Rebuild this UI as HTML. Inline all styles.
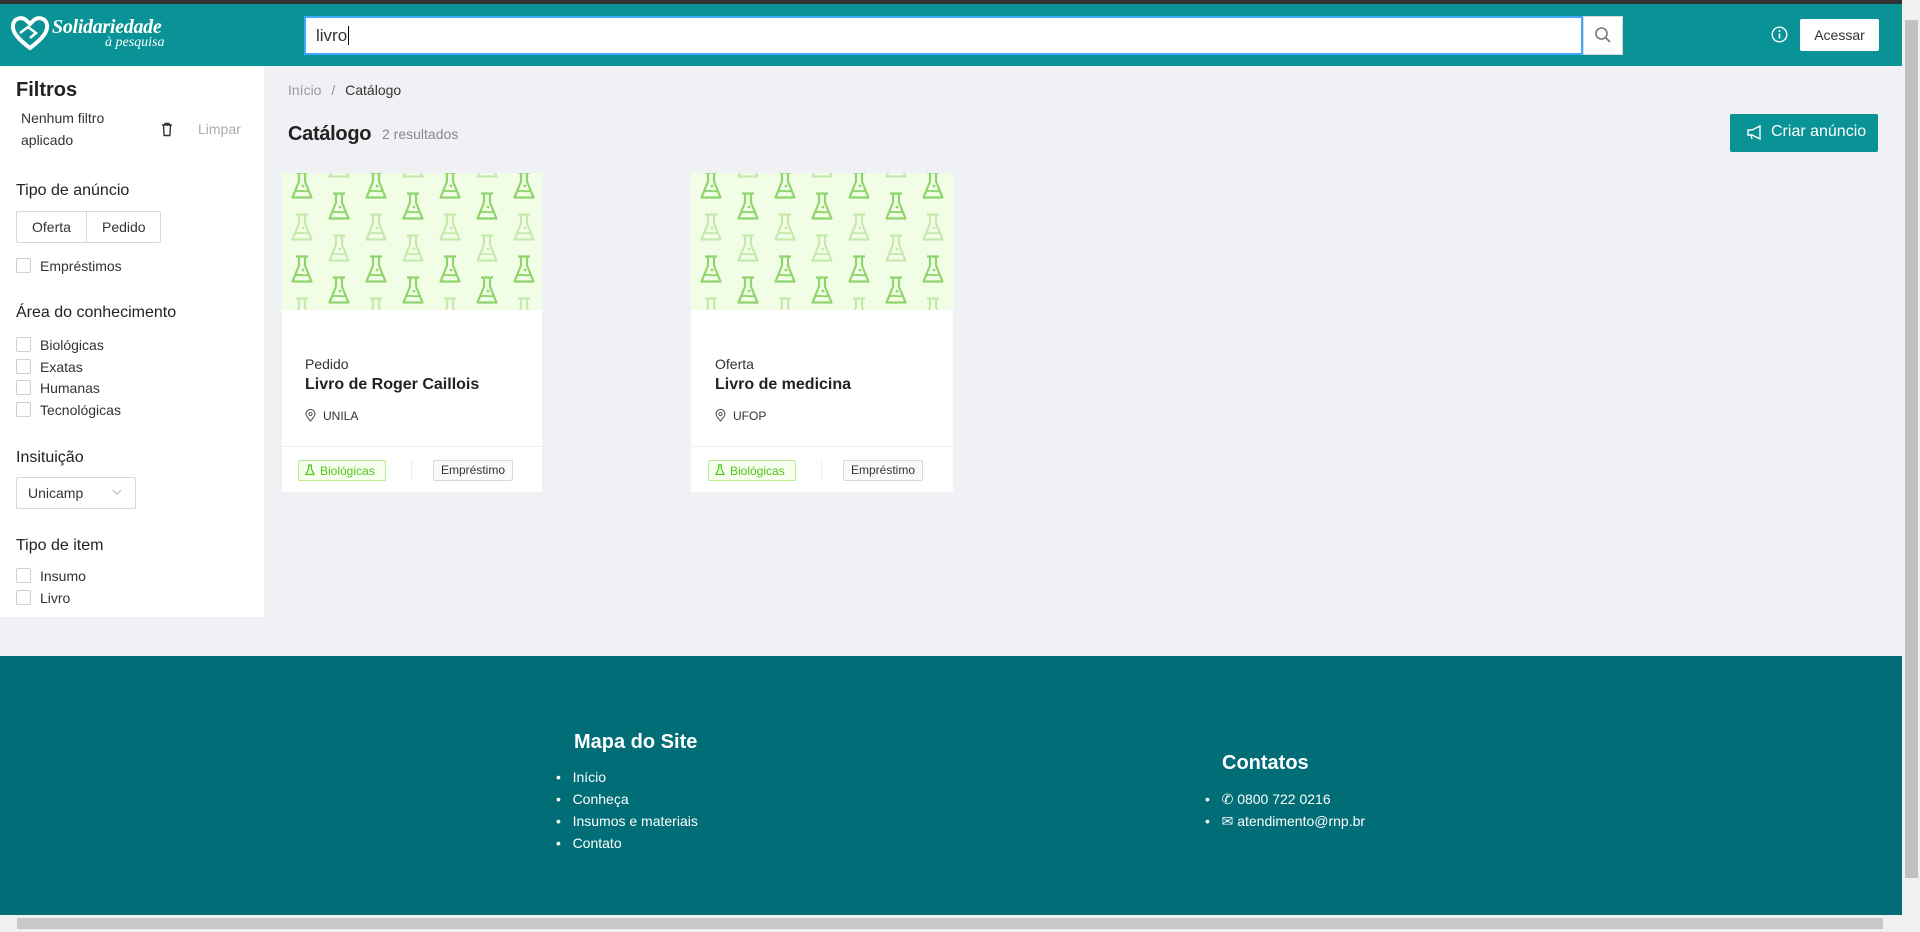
<!DOCTYPE html>
<html><head><meta charset="utf-8"><style>
*{box-sizing:border-box;margin:0;padding:0}
body{width:1920px;height:932px;overflow:hidden;font-family:"Liberation Sans",sans-serif;background:#f0f1f5;position:relative;color:#222}
.a{position:absolute}
.t{position:absolute;white-space:nowrap;line-height:1}
.cb{position:absolute;width:15px;height:15px;border:1px solid #d0d0d0;background:#fff;border-radius:2px}
</style></head><body>
<div class="a" style="left:0;top:0;width:1902px;height:4px;background:#333"></div>
<div class="a" style="left:0;top:4px;width:1902px;height:62px;background:#0a9396"></div>
<!-- logo -->
<svg class="a" style="left:10px;top:15px" width="40" height="36" viewBox="0 0 40 36"><path d="M20 33 C8 24 2 17 3 10 C4 3 12 1 17 6 L20 9 L23 6 C28 1 36 3 37 10 C38 17 32 24 20 33Z" fill="none" stroke="#fff" stroke-width="4"/><path d="M10 18 L18 12 L26 18 L20 23" fill="none" stroke="#fff" stroke-width="2.5"/></svg>
<div class="t" style="left:52px;top:17px;font-family:'Liberation Serif',serif;font-style:italic;font-weight:bold;font-size:20px;color:#fff;letter-spacing:-0.3px">Solidariedade</div>
<div class="t" style="left:105px;top:36px;font-family:'Liberation Serif',serif;font-style:italic;font-size:14px;color:#fff">à pesquisa</div>
<!-- search -->
<div class="a" style="left:304px;top:16px;width:1279px;height:39px;background:#fff;border:2px solid #40a9ff"></div>
<div class="t" style="left:316px;top:27px;font-size:17px;color:#333">livro<span style="border-left:1px solid #000;margin-left:1px"></span></div>
<div class="a" style="left:1583px;top:16px;width:40px;height:39px;background:#fff;border:1px solid #d9d9d9"></div>
<svg class="a" style="left:1594px;top:26px" width="18" height="18" viewBox="0 0 18 18"><circle cx="7.5" cy="7.5" r="5.5" fill="none" stroke="#777" stroke-width="1.6"/><path d="M11.5 11.5 L16 16" stroke="#777" stroke-width="1.6"/></svg>
<svg class="a" style="left:1771px;top:26px" width="17" height="17" viewBox="0 0 17 17"><circle cx="8.5" cy="8.5" r="7.3" fill="none" stroke="#fff" stroke-width="1.4"/><path d="M8.5 7.5v5" stroke="#fff" stroke-width="1.6"/><circle cx="8.5" cy="5" r="1" fill="#fff"/></svg>
<div class="a" style="left:1800px;top:19px;width:79px;height:32px;background:#fff;border-radius:2px;font-size:14px;color:#333;text-align:center;line-height:32px">Acessar</div>
<!-- scrollbars -->
<div class="a" style="left:1902px;top:0;width:18px;height:932px;background:#f0f0f0"></div>
<div class="a" style="left:1905px;top:20px;width:13px;height:858px;background:#c1c1c1"></div>
<div class="a" style="left:0;top:915px;width:1902px;height:17px;background:#f0f0f0"></div>
<div class="a" style="left:17px;top:918px;width:1866px;height:11px;background:#c8c8c8"></div>
<!-- sidebar -->
<div class="a" style="left:0;top:66px;width:264px;height:551px;background:#fff"></div>
<div class="t" style="left:16px;top:80px;font-size:20px;font-weight:bold;color:#222">Filtros</div>
<div class="t" style="left:21px;top:111px;font-size:14px;color:#333">Nenhum filtro</div>
<div class="t" style="left:21px;top:133px;font-size:14px;color:#333">aplicado</div>
<svg class="a" style="left:160px;top:122px" width="14" height="15" viewBox="0 0 14 15"><path d="M2 3h10M5 3V1.5h4V3M3.5 3l.6 10.5h5.8L10.5 3" fill="none" stroke="#333" stroke-width="1.4"/></svg>
<div class="t" style="left:198px;top:122px;font-size:14px;color:#aaa">Limpar</div>
<div class="t" style="left:16px;top:183px;font-size:16px;color:#222">Tipo de anúncio</div>
<div class="a" style="left:16px;top:211px;width:145px;height:32px;border:1px solid #d9d9d9;border-radius:2px;background:#fff"></div>
<div class="a" style="left:86px;top:211px;width:1px;height:32px;background:#d9d9d9"></div>
<div class="t" style="left:32px;top:220px;font-size:14px;color:#333">Oferta</div>
<div class="t" style="left:102px;top:220px;font-size:14px;color:#333">Pedido</div>
<div class="cb" style="left:16px;top:258px"></div><div class="t" style="left:40px;top:259px;font-size:14px;color:#333">Empréstimos</div>
<div class="t" style="left:16px;top:305px;font-size:16px;color:#222">Área do conhecimento</div>
<div class="cb" style="left:16px;top:337px"></div><div class="t" style="left:40px;top:338px;font-size:14px;color:#333">Biológicas</div>
<div class="cb" style="left:16px;top:359px"></div><div class="t" style="left:40px;top:360px;font-size:14px;color:#333">Exatas</div>
<div class="cb" style="left:16px;top:380px"></div><div class="t" style="left:40px;top:381px;font-size:14px;color:#333">Humanas</div>
<div class="cb" style="left:16px;top:402px"></div><div class="t" style="left:40px;top:403px;font-size:14px;color:#333">Tecnológicas</div>
<div class="t" style="left:16px;top:450px;font-size:16px;color:#222">Insituição</div>
<div class="a" style="left:16px;top:477px;width:120px;height:32px;border:1px solid #d9d9d9;border-radius:2px;background:#fff"></div>
<div class="t" style="left:28px;top:486px;font-size:14px;color:#333">Unicamp</div>
<svg class="a" style="left:112px;top:489px" width="10" height="7" viewBox="0 0 10 7"><path d="M1 1l4 4 4-4" fill="none" stroke="#bbb" stroke-width="1.2"/></svg>
<div class="t" style="left:16px;top:538px;font-size:16px;color:#222">Tipo de item</div>
<div class="cb" style="left:16px;top:568px"></div><div class="t" style="left:40px;top:569px;font-size:14px;color:#333">Insumo</div>
<div class="cb" style="left:16px;top:590px"></div><div class="t" style="left:40px;top:591px;font-size:14px;color:#333">Livro</div>
<!-- main -->
<div class="t" style="left:288px;top:83px;font-size:14px;color:#999">Início <span style="margin:0 6px">/</span> <span style="color:#333">Catálogo</span></div>
<div class="t" style="left:288px;top:124px;font-size:20px;font-weight:bold;color:#222;letter-spacing:-0.3px">Catálogo</div>
<div class="t" style="left:382px;top:127px;font-size:14px;color:#888">2 resultados</div>
<div class="a" style="left:1730px;top:114px;width:148px;height:38px;background:#0a9396;border-radius:2px"></div>
<svg class="a" style="left:1746px;top:124px" width="18" height="17" viewBox="0 0 18 17"><path d="M2 6h4l8-4v13l-8-4H2z M5 11l1 4" fill="none" stroke="#fff" stroke-width="1.4"/></svg>
<div class="t" style="left:1771px;top:124px;font-size:16px;color:#fff">Criar anúncio</div>
<svg width="0" height="0" style="position:absolute"><defs>
<symbol id="fl" viewBox="0 0 24 30"><path d="M6 2.5h12M9 2.5v9L2.5 27.5h19L15 11.5v-9" fill="none" stroke-width="2.2" stroke-linejoin="round"/><path d="M4.5 22c4-3 9 1 15-1.5" fill="none" stroke-width="1.8"/><circle cx="13" cy="16" r="0.9"/></symbol>
<pattern id="pt" width="74" height="84" patternUnits="userSpaceOnUse" x="0" y="0">
<rect width="74" height="84" fill="#f2fde6"/>
<g stroke="#8fd46c" fill="#8fd46c">
<use href="#fl" x="8" y="-3" width="24" height="30"/>
<use href="#fl" x="8" y="81" width="24" height="30"/>
<use href="#fl" x="45" y="18" width="24" height="30"/>
</g>
<g stroke="#c6eaae" fill="#c6eaae">
<use href="#fl" x="8" y="39" width="24" height="30"/>
<use href="#fl" x="45" y="60" width="24" height="30"/>
<use href="#fl" x="45" y="-24" width="24" height="30"/>
</g>
</pattern></defs></svg>
<!-- card 1 -->
<div class="a" style="left:282px;top:173px;width:260px;height:319px;background:#fff"></div>
<svg class="a" style="left:282px;top:173px" width="260" height="137"><rect width="260" height="137" fill="url(#pt)"/></svg>
<div class="t" style="left:305px;top:357px;font-size:14px;color:#333">Pedido</div>
<div class="t" style="left:305px;top:377px;font-size:16px;font-weight:bold;color:#222">Livro de Roger Caillois</div>
<svg class="a" style="left:305px;top:409px" width="11" height="13" viewBox="0 0 11 13"><path d="M5.5 12C2 8 1 6.5 1 5a4.5 4.5 0 0 1 9 0c0 1.5-1 3-4.5 7z" fill="none" stroke="#555" stroke-width="1.1"/><circle cx="5.5" cy="5" r="1.6" fill="none" stroke="#555"/></svg>
<div class="t" style="left:323px;top:410px;font-size:12px;color:#333">UNILA</div>
<div class="a" style="left:282px;top:446px;width:260px;height:1px;background:#eee"></div>
<div class="a" style="left:298px;top:460px;width:88px;height:21px;border:1px solid #b7eb8f;background:#f6ffed;border-radius:2px"></div>
<svg class="a" style="left:305px;top:464px" width="10" height="12" viewBox="0 0 20 24"><path d="M6 2h8M7.5 2v7L2 21h16L12.5 9V2" fill="none" stroke="#52c41a" stroke-width="2.5"/></svg>
<div class="t" style="left:320px;top:465px;font-size:12px;color:#52c41a">Biológicas</div>
<div class="a" style="left:411px;top:460px;width:1px;height:21px;background:#eee"></div>
<div class="a" style="left:433px;top:460px;width:80px;height:21px;border:1px solid #d9d9d9;background:#fafafa;border-radius:2px;font-size:12px;text-align:center;line-height:19px;color:#333">Empréstimo</div>
<!-- card 2 -->
<div class="a" style="left:691px;top:173px;width:262px;height:319px;background:#fff"></div>
<svg class="a" style="left:691px;top:173px" width="262" height="137"><rect width="262" height="137" fill="url(#pt)"/></svg>
<div class="t" style="left:715px;top:357px;font-size:14px;color:#333">Oferta</div>
<div class="t" style="left:715px;top:377px;font-size:16px;font-weight:bold;color:#222">Livro de medicina</div>
<svg class="a" style="left:715px;top:409px" width="11" height="13" viewBox="0 0 11 13"><path d="M5.5 12C2 8 1 6.5 1 5a4.5 4.5 0 0 1 9 0c0 1.5-1 3-4.5 7z" fill="none" stroke="#555" stroke-width="1.1"/><circle cx="5.5" cy="5" r="1.6" fill="none" stroke="#555"/></svg>
<div class="t" style="left:733px;top:410px;font-size:12px;color:#333">UFOP</div>
<div class="a" style="left:691px;top:446px;width:262px;height:1px;background:#eee"></div>
<div class="a" style="left:708px;top:460px;width:88px;height:21px;border:1px solid #b7eb8f;background:#f6ffed;border-radius:2px"></div>
<svg class="a" style="left:715px;top:464px" width="10" height="12" viewBox="0 0 20 24"><path d="M6 2h8M7.5 2v7L2 21h16L12.5 9V2" fill="none" stroke="#52c41a" stroke-width="2.5"/></svg>
<div class="t" style="left:730px;top:465px;font-size:12px;color:#52c41a">Biológicas</div>
<div class="a" style="left:821px;top:460px;width:1px;height:21px;background:#eee"></div>
<div class="a" style="left:843px;top:460px;width:80px;height:21px;border:1px solid #d9d9d9;background:#fafafa;border-radius:2px;font-size:12px;text-align:center;line-height:19px;color:#333">Empréstimo</div>
<!-- footer -->
<div class="a" style="left:0;top:656px;width:1902px;height:259px;background:#006d77"></div>
<div class="t" style="left:574px;top:732px;font-size:20px;font-weight:bold;color:#fff">Mapa do Site</div>
<div class="a" style="left:556px;top:766px;font-size:14px;color:#fff;line-height:22px">
<div>•&nbsp;&nbsp;&nbsp;Início</div><div>•&nbsp;&nbsp;&nbsp;Conheça</div><div>•&nbsp;&nbsp;&nbsp;Insumos e materiais</div><div>•&nbsp;&nbsp;&nbsp;Contato</div></div>
<div class="t" style="left:1222px;top:753px;font-size:20px;font-weight:bold;color:#fff">Contatos</div>
<div class="a" style="left:1205px;top:788px;font-size:14px;color:#fff;line-height:22px">
<div>•&nbsp;&nbsp;&nbsp;✆ 0800 722 0216</div><div>•&nbsp;&nbsp;&nbsp;✉ atendimento@rnp.br</div></div>
</body></html>
